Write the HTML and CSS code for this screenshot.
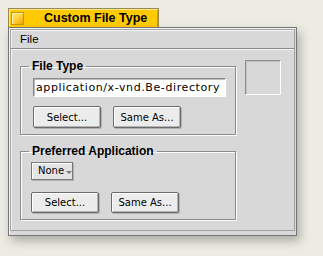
FILE: index.html
```html
<!DOCTYPE html>
<html>
<head>
    <meta charset="UTF-8">
    <title>Custom File Type</title>
    <link rel="stylesheet" href="styles.css">
</head>
<body>
    <div class="desk">
        <div class="tab">
            <span class="close-box"></span>
            <span class="tab-title">Custom File Type</span>
        </div>
        <div class="window">
            <div class="menu-bar">
                <span class="menu-item">File</span>
            </div>
            <div class="content">
                <div class="top-row">
                    <fieldset class="group group-type">
                        <legend>File Type</legend>
                        <div class="group-body">
                            <div class="text-field">application/x-vnd.Be-directory</div>
                            <div class="button-row">
                                <button class="btn">Select...</button>
                                <button class="btn">Same As...</button>
                            </div>
                        </div>
                    </fieldset>
                    <div class="icon-well"></div>
                </div>
                <fieldset class="group group-app">
                    <legend>Preferred Application</legend>
                    <div class="group-body">
                        <div class="menu-field">None<span class="arrow"></span></div>
                        <div class="button-row">
                            <button class="btn">Select...</button>
                            <button class="btn">Same As...</button>
                        </div>
                    </div>
                </fieldset>
            </div>
        </div>
    </div>
</body>
</html>
```

FILE: styles.css
```css
html, body {
    margin: 0;
    padding: 0;
    width: 323px;
    height: 256px;
    overflow: hidden;
    background: #ecebe4;  /* paper desktop */
    font-family: "Liberation Sans", Arial, sans-serif;
}

.desk {
    padding: 8px 0 0 8px;
}

/* yellow title tab */
.tab {
    width: 151px;
    height: 19px;
    box-sizing: border-box;
    background: #ffcb00;
    border: 1px solid #9a8a50;
    border-bottom: none;
    box-shadow: inset 1px 1px 0 #ffe88a, inset -1px 0 0 #d79c00;
    display: flex;
    align-items: center;
}

.close-box {
    width: 13px;
    height: 13px;
    margin-left: 2px;
    box-sizing: border-box;
    border: 1px solid #c89600;
    background: linear-gradient(135deg, #ffe46a 0%, #ffd23a 50%, #ef9f00 100%);
    box-shadow: inset 1px 1px 0 #fff2b0;
}

.tab-title {
    margin-left: 20px;
    font-weight: bold;
    font-size: 12.5px;
    color: #000;
}

/* window frame */
.window {
    width: 289px;
    height: 209px;
    box-sizing: border-box;
    background: #d8d8d8;
    border: 1px solid #767676;
    padding: 3px;
    box-shadow: inset 1px 1px 0 #f4f4f4, 3px 5px 9px rgba(60, 60, 50, 0.35);
}

.menu-bar {
    height: 18px;
    margin: -2px -2px 0 -2px;
    background: #d8d8d8;
    border-top: 1px solid #a4a4a4;
    border-left: 1px solid #a4a4a4;
    border-right: 1px solid #a4a4a4;
    border-bottom: 1px solid #8a8a8a;
    box-shadow: inset 1px 1px 0 #f4f4f4;
    display: flex;
    align-items: center;
    padding-left: 9px;
}

.menu-item {
    font-size: 11.5px;
    color: #000;
}

.content {
    height: 182px;
    box-sizing: border-box;
    margin: 0 -2px;
    border-left: 1px solid #a4a4a4;
    border-right: 1px solid #a4a4a4;
    border-bottom: 1px solid #a4a4a4;
    box-shadow: inset 1px 1px 0 #f4f4f4;
    padding: 9px 0 0 9px;
}

.top-row {
    display: flex;
    align-items: flex-start;
    gap: 9px;
}

/* etched group box */
.group {
    width: 216px;
    box-sizing: border-box;
    margin: 0;
    padding: 0 0 0 6px;
    border: 1px solid #8c8c8c;
    box-shadow: 1px 1px 0 #fbfbfb, inset 1px 1px 0 #fbfbfb;
}

.group legend {
    font-weight: bold;
    font-size: 12px;
    line-height: 16px;
    margin-left: 2px;
    padding: 0 3px;
}

.group-type .group-body {
    padding: 4px 0 6px 6px;
}

.group-app {
    margin-top: 8px;
}

.group-app .group-body {
    padding: 3px 0 6px 4px;
}

.text-field {
    width: 193px;
    height: 19px;
    box-sizing: border-box;
    background: #fff;
    border: 1px solid;
    border-color: #888 #fff #fff #888;
    box-shadow: inset 1px 1px 0 #bdbdbd;
    font-family: "DejaVu Sans", sans-serif;
    font-size: 11px;
    letter-spacing: 0.6px;
    line-height: 17px;
    padding-left: 2px;
    white-space: nowrap;
    overflow: hidden;
}

.button-row {
    display: flex;
    gap: 12px;
    margin-top: 9px;
}

.group-app .button-row {
    margin-top: 12px;
}

.btn {
    width: 68px;
    height: 22px;
    box-sizing: border-box;
    margin: 0;
    padding: 0;
    border: 1px solid #6c6c6c;
    border-radius: 2px;
    background: #ececec;
    box-shadow: inset 1px 1px 0 #fff, inset -1px -1px 0 #b4b4b4, 1px 1px 0 #b0b0b0;
    font-family: "DejaVu Sans", sans-serif;
    font-size: 10px;
    color: #000;
}

.group-app .btn {
    height: 21px;
}

.menu-field {
    width: 42px;
    height: 18px;
    box-sizing: border-box;
    border: 1px solid #7a7a7a;
    background: #e4e4e4;
    box-shadow: inset 1px 1px 0 #fff, 1px 1px 0 #b0b0b0;
    font-family: "DejaVu Sans", sans-serif;
    font-size: 10px;
    line-height: 16px;
    padding-left: 6px;
    display: flex;
    align-items: center;
    gap: 2px;
}

.arrow {
    width: 0;
    height: 0;
    margin-top: 3px;
    border-left: 3px solid transparent;
    border-right: 3px solid transparent;
    border-top: 3px solid #777;
}

.icon-well {
    width: 36px;
    height: 35px;
    margin-top: 2px;
    box-sizing: border-box;
    border: 1px solid;
    border-color: #8c8c8c #fbfbfb #fbfbfb #8c8c8c;
    box-shadow: inset 1px 1px 0 #c4c4c4;
}
```
